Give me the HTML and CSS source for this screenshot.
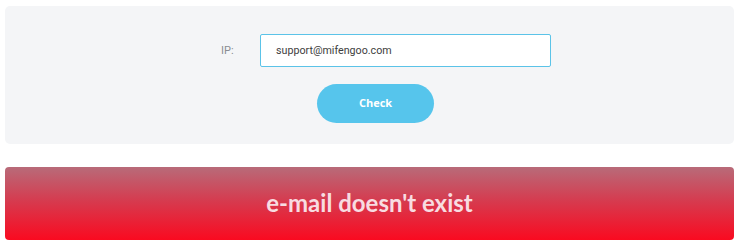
FILE: index.html
```html
<!DOCTYPE html>
<html>
<head>
<meta charset="utf-8">
<link rel="stylesheet" href="styles.css">
</head>
<body>
<div class="page">
  <div class="panel">
    <div class="row">
      <label class="label">IP:</label>
      <div class="input">support@mifengoo.com</div>
    </div>
    <div class="btn-row">
      <button class="btn">Check</button>
    </div>
  </div>
  <div class="result">e-mail doesn't exist</div>
</div>
</body>
</html>
```
FILE: styles.css
```css
html, body {
  margin: 0;
  padding: 0;
  background: #ffffff;
}
.page {
  padding: 6px 1px 0 5px;
  display: flex;
  flex-direction: column;
  gap: 23px;
}
.panel {
  background: #f4f5f7;
  border-radius: 5px;
  height: 138px;
  box-sizing: border-box;
  padding-top: 28px;
}
.row {
  display: flex;
  align-items: center;
  padding-left: 216px;
}
.label {
  font-family: Roboto, sans-serif;
  font-size: 11px;
  color: #8a8d92;
  width: 39px;
}
.input {
  width: 291px;
  height: 33px;
  box-sizing: border-box;
  border: 1px solid #5bc3e8;
  border-radius: 2px;
  background: #fff;
  font-family: Roboto, sans-serif;
  font-size: 10.7px;
  color: #3d3d3d;
  padding-left: 15px;
  display: flex;
  align-items: center;
}
.btn-row {
  padding-left: 312px;
  margin-top: 17px;
}
.btn {
  width: 117px;
  height: 39px;
  border: none;
  border-radius: 20px;
  background: #56c5ec;
  color: #ffffff;
  font-family: "Open Sans", sans-serif;
  font-weight: 700;
  font-size: 11px;
  padding: 0 0 2px 0;
}
.result {
  height: 73px;
  box-sizing: border-box;
  border-radius: 4px;
  background: linear-gradient(to bottom, #b86b79 0%, #d53c50 45%, #fa0a20 100%);
  color: #f8dce1;
  font-family: Lato, sans-serif;
  font-weight: 700;
  font-size: 24px;
  display: flex;
  align-items: center;
  justify-content: center;
  padding-bottom: 3px;
}
```
